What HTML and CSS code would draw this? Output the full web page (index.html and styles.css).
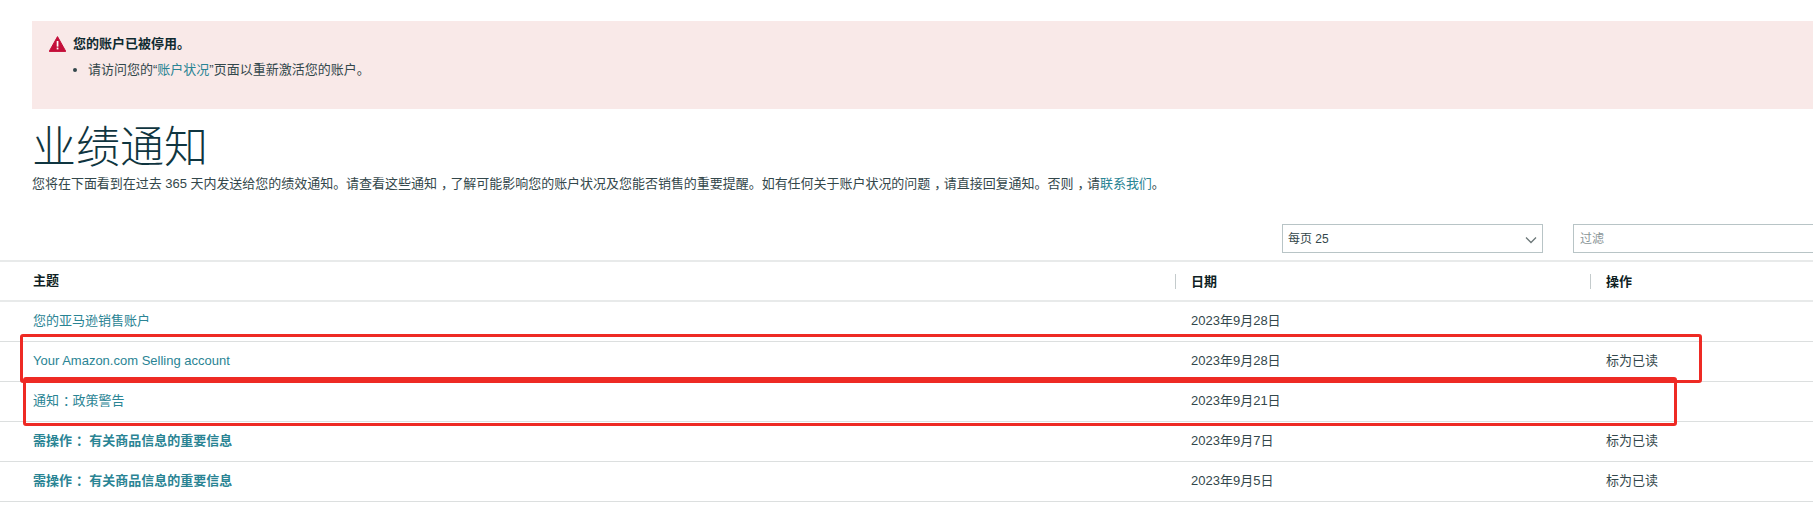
FILE: index.html
```html
<!DOCTYPE html>
<html lang="zh-CN">
<head>
<meta charset="utf-8">
<title>业绩通知</title>
<link rel="stylesheet" href="styles.css">
</head>
<body>
<div class="alert">
  <div class="alert-head">
    <svg class="alert-icon" viewBox="0 0 17 16" aria-hidden="true"><path d="M8.5 0.6 L16.8 15.4 L0.2 15.4 Z" fill="#c40f3a" stroke="#c40f3a" stroke-linejoin="round"/><rect x="7.7" y="5" width="1.7" height="5.6" fill="#fff"/><rect x="7.7" y="11.6" width="1.7" height="1.8" fill="#fff"/></svg>
    <strong>您的账户已被停用。</strong>
  </div>
  <ul class="alert-list">
    <li>请访问您的“<a href="#">账户状况</a>”页面以重新激活您的账户。</li>
  </ul>
</div>
<h1 class="title">业绩通知</h1>
<p class="desc">您将在下面看到在过去 365 天内发送给您的绩效通知。请查看这些通知<span class="cp">，</span>了解可能影响您的账户状况及您能否销售的重要提醒。如有任何关于账户状况的问题<span class="cp">，</span>请直接回复通知。否则<span class="cp">，</span>请<a href="#">联系我们</a>。</p>
<div class="toolbar">
  <div class="select">每页 25
    <svg class="chev" viewBox="0 0 12 8" aria-hidden="true"><path d="M1 1.5 L6 6.5 L11 1.5" fill="none" stroke="#6c7778" stroke-width="1.3"/></svg>
  </div>
  <div class="filter">过滤</div>
</div>
<div class="table-wrap">
  <table class="table">
    <thead>
      <tr><th class="c1"><span>主题</span></th><th class="c2"><span class="sep">日期</span></th><th><span class="sep">操作</span></th></tr>
    </thead>
    <tbody>
      <tr><td><a href="#">您的亚马逊销售账户</a></td><td>2023年9月28日</td><td></td></tr>
      <tr><td><a href="#">Your Amazon.com Selling account</a></td><td>2023年9月28日</td><td>标为已读</td></tr>
      <tr><td><a href="#">通知<span class="cp">：</span>政策警告</a></td><td>2023年9月21日</td><td></td></tr>
      <tr><td><a href="#" class="b">需操作<span class="cp">：</span> 有关商品信息的重要信息</a></td><td>2023年9月7日</td><td>标为已读</td></tr>
      <tr><td><a href="#" class="b">需操作<span class="cp">：</span> 有关商品信息的重要信息</a></td><td>2023年9月5日</td><td>标为已读</td></tr>
    </tbody>
  </table>
  <div class="mark mark-a"></div>
  <div class="mark mark-b"></div>
</div>
</body>
</html>
```
FILE: styles.css
```css
* { box-sizing: border-box; }
html, body { margin: 0; height: 509px; overflow: hidden; background: #fff; }
body { font: 13px/18px "Liberation Sans", "Noto Sans CJK SC", sans-serif; color: #33474b; width: 1813px; padding-top: 21px; }
a { color: #2a8494; text-decoration: none; }
.cp { font-feature-settings: "halt"; margin: 0 3px 0 4px; }
.alert { margin-left: 32px; height: 88px; background: #f9e9e8; padding: 14px 18px; }
.alert-head { display: flex; align-items: center; gap: 7px; height: 18px; margin-left: -1px; color: #0f2a30; }
.alert-icon { width: 17px; height: 16px; flex: none; }
.alert-list { margin: 8px 0 0; padding-left: 38px; }
.title { margin: 15px 0 0 32px; font-size: 44px; line-height: 48px; font-weight: 300; color: #0f3540; }
.desc { margin: 3px 0 0 32px; letter-spacing: -0.03px; }
.toolbar { display: flex; gap: 30px; margin: 31px 0 0 1282px; height: 29px; width: 800px; }
.select, .filter { height: 29px; border: 1px solid #b8c4c6; display: flex; align-items: center; }
.select { width: 261px; padding-left: 5px; position: relative; font-size: 12px; }
.chev { position: absolute; right: 5px; top: 11px; width: 12px; height: 8px; }
.filter { width: 400px; padding-left: 6px; color: #8a9597; font-size: 12px; }
.table-wrap { position: relative; margin-top: 7px; }
.table { width: 1813px; table-layout: fixed; border-collapse: collapse; border-top: 2px solid #e8eaea; }
.table th, .table td { padding: 0; text-align: left; font-weight: normal; }
.table th { height: 40px; border-bottom: 2px solid #e8eaea; color: #0f1f24; font-weight: 700; }
.table td { height: 40px; border-bottom: 1px solid #dcdfdf; }
.c1 { width: 1175px; }
.c2 { width: 415px; }
.table th:first-child, .table td:first-child { padding-left: 33px; }
.table td:nth-child(2) { padding-left: 16px; }
.table td:nth-child(3) { padding-left: 16px; }
.sep { display: block; border-left: 1px solid #c4cbcc; padding-left: 15px; line-height: 15px; }
.b { font-weight: 700; }
.mark { position: absolute; border: 3px solid #ee2a24; border-radius: 3px; }
.mark-a { left: 20px; top: 74px; width: 1682px; height: 49px; }
.mark-b { left: 23px; top: 117px; width: 1654px; height: 49px; }
```
